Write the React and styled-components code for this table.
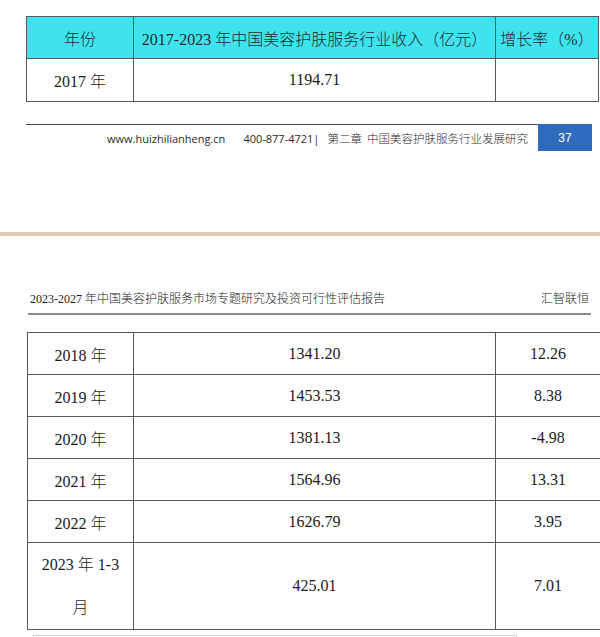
import React from "react";
import styled, { createGlobalStyle } from "styled-components";

const GlobalStyle = createGlobalStyle`
  body {
    margin: 0;
    background: #ffffff;
    font-family: "Liberation Serif", "Noto Sans CJK SC", serif;
    color: #1a1a1a;
  }
`;

const topRows = [{ year: "2017 年", revenue: "1194.71", growth: "" }];

const bottomRows = [
    { year: "2018 年", revenue: "1341.20", growth: "12.26" },
    { year: "2019 年", revenue: "1453.53", growth: "8.38" },
    { year: "2020 年", revenue: "1381.13", growth: "-4.98" },
    { year: "2021 年", revenue: "1564.96", growth: "13.31" },
    { year: "2022 年", revenue: "1626.79", growth: "3.95" },
];

const App = () => {
    return (
        <>
            <GlobalStyle />
            <Page>
                <PageTop>
                    <DataTable $width={569} $cols={[106, 361, 102]}>
                        <thead>
                            <tr>
                                <HeadCell>年份</HeadCell>
                                <HeadCell>2017-2023 年中国美容护肤服务行业收入（亿元）</HeadCell>
                                <HeadCell>增长率（%）</HeadCell>
                            </tr>
                        </thead>
                        <tbody>
                            {topRows.map((r) => (
                                <tr key={r.year}>
                                    <Cell $h={43}>{r.year}</Cell>
                                    <Cell $h={43}>{r.revenue}</Cell>
                                    <Cell $h={43}>{r.growth}</Cell>
                                </tr>
                            ))}
                        </tbody>
                    </DataTable>

                    <Footer>
                        <FooterLine>
                            <FooterUrl>www.huizhilianheng.cn</FooterUrl>
                            <FooterPhone>400-877-4721|</FooterPhone>
                            <FooterChapter>第二章&nbsp; 中国美容护肤服务行业发展研究</FooterChapter>
                        </FooterLine>
                        <PageNumber>37</PageNumber>
                    </Footer>
                </PageTop>

                <PageBreak />

                <PageBottom>
                    <ReportHeader>
                        <span>2023-2027 年中国美容护肤服务市场专题研究及投资可行性评估报告</span>
                        <span>汇智联恒</span>
                    </ReportHeader>

                    <DataTable $width={570} $cols={[105, 361, 104]} $top={17}>
                        <tbody>
                            {bottomRows.map((r) => (
                                <tr key={r.year}>
                                    <Cell $h={42}>{r.year}</Cell>
                                    <Cell $h={42}>{r.revenue}</Cell>
                                    <Cell $h={42}>{r.growth}</Cell>
                                </tr>
                            ))}
                            <tr>
                                <Cell $h={85}>
                                    <TwoLine>
                                        <span>2023 年 1-3</span>
                                        <span>月</span>
                                    </TwoLine>
                                </Cell>
                                <Cell $h={85}>425.01</Cell>
                                <Cell $h={85}>7.01</Cell>
                            </tr>
                        </tbody>
                    </DataTable>

                    <NextBox />
                </PageBottom>
            </Page>
        </>
    );
};

export default App;

const Page = styled.div`
    width: 600px;
    height: 637px;
    overflow: hidden;
`;

const PageTop = styled.div`
    padding: 16px 0 0 26px;
`;

const DataTable = styled.table`
    width: ${(p) => p.$width}px;
    margin-top: ${(p) => p.$top || 0}px;
    border-collapse: collapse;
    table-layout: fixed;
    font-size: 16px;
    font-weight: 300;

    td:nth-child(1), th:nth-child(1) { width: ${(p) => p.$cols[0]}px; }
    td:nth-child(2), th:nth-child(2) { width: ${(p) => p.$cols[1]}px; }
    td:nth-child(3), th:nth-child(3) { width: ${(p) => p.$cols[2]}px; }
`;

const HeadCell = styled.th`
    height: 41px;
    padding: 0;
    background: #3de4ef;
    border: 1px solid #5a5a5a;
    font-weight: 300;
    text-align: center;
    color: #2a2a2a;
    white-space: nowrap;
`;

const Cell = styled.td`
    height: ${(p) => p.$h - 1}px;
    padding: 0;
    border: 1px solid #5a5a5a;
    text-align: center;
    vertical-align: middle;
    color: #1a1a1a;
`;

const TwoLine = styled.div`
    display: flex;
    flex-direction: column;
    align-items: center;
    line-height: 43px;
`;

const Footer = styled.div`
    display: flex;
    margin-top: 22px;
    width: 566px;
`;

const FooterLine = styled.div`
    flex: 1;
    border-top: 1px solid #444;
    display: flex;
    justify-content: flex-end;
    align-items: center;
    padding: 0 10px 0 0;
    height: 26px;
    font-size: 11.5px;
    color: #2a2a2a;
`;

const FooterUrl = styled.span`
    font-family: "Open Sans", "Liberation Sans", sans-serif;
    font-size: 11px;
    margin-right: 18px;
`;

const FooterPhone = styled.span`
    font-family: "Open Sans", "Liberation Sans", sans-serif;
    font-size: 11px;
    margin-right: 8px;
`;

const FooterChapter = styled.span`
    font-family: "Noto Sans CJK SC", sans-serif;
    font-size: 11.5px;
    font-weight: 300;
`;

const PageNumber = styled.div`
    width: 54px;
    height: 27px;
    background: #2f6bbd;
    color: #ffffff;
    font-family: "Liberation Sans", sans-serif;
    font-size: 12px;
    display: flex;
    align-items: center;
    justify-content: center;
`;

const PageBreak = styled.div`
    margin-top: 81px;
    height: 4px;
    background: #d9ccb0;
`;

const PageBottom = styled.div`
    padding: 0 0 0 27px;
`;

const ReportHeader = styled.div`
    margin: 55px 9px 0 1px;
    padding: 0 2px 6px 2px;
    border-bottom: 2px solid #8a8a8a;
    display: flex;
    justify-content: space-between;
    font-size: 12px;
    font-weight: 300;
    line-height: 16px;
    color: #222;
`;

const NextBox = styled.div`
    margin: 5px 0 0 6px;
    width: 482px;
    height: 12px;
    border: 1px solid #d4d4d4;
    border-bottom: none;
`;
